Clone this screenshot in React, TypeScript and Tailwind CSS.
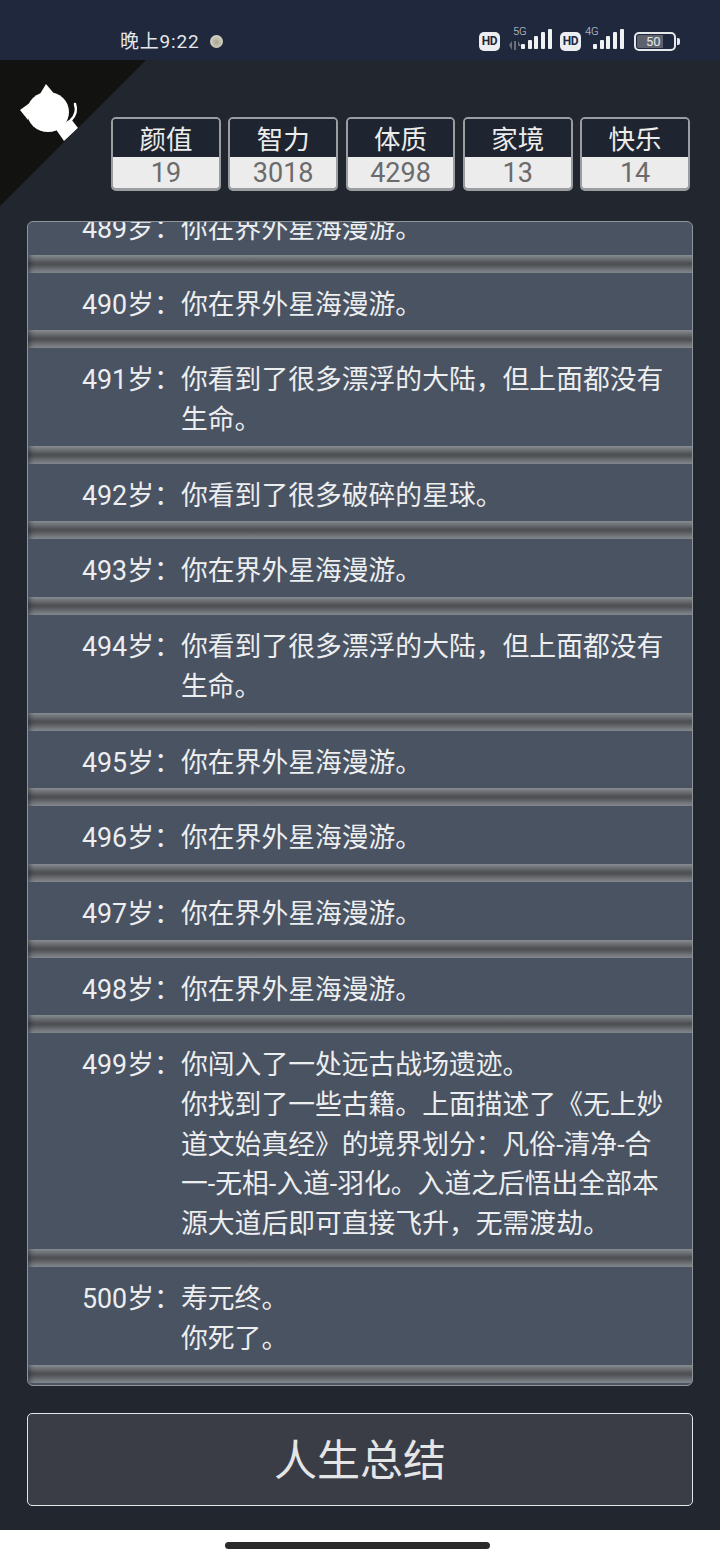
const font = { fontFamily: '"Roboto", "Noto Sans CJK SC", sans-serif' }

const stats = [
  { label: '颜值', value: 19 },
  { label: '智力', value: 3018 },
  { label: '体质', value: 4298 },
  { label: '家境', value: 13 },
  { label: '快乐', value: 14 },
]

const floating = '你看到了很多漂浮的大陆，但上面都没有生命。'
const roaming = '你在界外星海漫游。'

const rows = [
  { age: 489, lines: [roaming] },
  { age: 490, lines: [roaming] },
  { age: 491, lines: [floating] },
  { age: 492, lines: ['你看到了很多破碎的星球。'] },
  { age: 493, lines: [roaming] },
  { age: 494, lines: [floating] },
  { age: 495, lines: [roaming] },
  { age: 496, lines: [roaming] },
  { age: 497, lines: [roaming] },
  { age: 498, lines: [roaming] },
  {
    age: 499,
    lines: [
      '你闯入了一处远古战场遗迹。',
      '你找到了一些古籍。上面描述了《无上妙道文始真经》的境界划分：凡俗-清净-合一-无相-入道-羽化。入道之后悟出全部本源大道后即可直接飞升，无需渡劫。',
    ],
  },
  { age: 500, lines: ['寿元终。', '你死了。'] },
]

function Signal({ label, lost }: { label: string; lost?: boolean }) {
  return (
    <div className="relative h-[24px] w-[44px]">
      <span className="absolute left-[1px] top-[-3px] text-[11px] font-light leading-[12px] text-[#d5d8de]">{label}</span>
      {lost && (
        <svg className="absolute left-[-3px] top-[12px]" width="12" height="9" viewBox="0 0 12 9" fill="#6b7078">
          <path d="M0 4 L3 0 L3 9 Z M5 0 H7 V9 H5 Z M9 0 L12 5 H9 Z" />
        </svg>
      )}
      <svg className="absolute left-[9px] top-0" width="31" height="20" viewBox="0 0 31 20" fill="#f0f1f3">
        <rect x="0" y="15" width="4" height="5" rx="1" />
        <rect x="7" y="11" width="4" height="9" rx="1" />
        <rect x="13" y="7" width="4" height="13" rx="1" />
        <rect x="20" y="3" width="4" height="17" rx="1" />
        <rect x="27" y="0" width="4" height="20" rx="1" />
      </svg>
    </div>
  )
}

function HdBadge() {
  return (
    <span className="flex h-[19px] w-[21px] items-center justify-center rounded-[5px] bg-[#eceef1] text-[12px] font-bold tracking-[-0.5px] text-[#1f283d]">
      HD
    </span>
  )
}

function StatusBar() {
  return (
    <div className="flex h-[60px] items-center bg-[#1f283d] pl-[120px] pt-[22px]">
      <span className="w-[86px] text-[19px] leading-none tracking-[0.8px] text-[#e4e6ea]">晚上9:22</span>
      <span className="ml-[4px] h-[13px] w-[13px] rounded-full bg-[radial-gradient(circle_at_50%_55%,#a8a690,#e8e6d8)]" />
      <div className="ml-auto flex items-center pr-[40px]">
        <HdBadge />
        <div className="ml-[12px] mr-[4px]">
          <Signal label="5G" lost />
        </div>
        <HdBadge />
        <div className="ml-[3px] mr-[6px]">
          <Signal label="4G" />
        </div>
        <div className="flex h-[19px] w-[42px] items-center rounded-[5px] border-2 border-[#e6e8eb] bg-[#1f283d] p-px">
          <span className="flex h-full w-[26px] items-center rounded-l-[2px] bg-[#5d626d]">
            <span className="ml-[9px] text-[13px] leading-none text-[#e6e8eb]">50</span>
          </span>
        </div>
        <span className="ml-px h-[7px] w-[3px] rounded-r-[2px] bg-[#e6e8eb]" />
      </div>
    </div>
  )
}

function CatBadge() {
  return (
    <div className="absolute left-0 top-0 h-[146px] w-[146px] bg-[#121311] [clip-path:polygon(0_0,100%_0,0_100%)]">
      <svg width="110" height="110" viewBox="0 0 110 110" fill="#ffffff">
        <ellipse cx="48" cy="52" rx="21" ry="20" />
        <path d="M46 24 L40 34 L56 36 Z" />
        <path d="M20 50 L31 42 L28 60 Z" />
        <path d="M55 68 L71 59 L78 68 L64 81 Z" />
        <path d="M75 44 C77 50 76 55 71 60" fill="none" stroke="#ffffff" strokeWidth="2.5" strokeLinecap="round" />
      </svg>
    </div>
  )
}

function StatCard({ label, value }: { label: string; value: number }) {
  return (
    <div className="flex h-[74px] flex-1 flex-col overflow-hidden rounded-[5px] border-2 border-b-[3px] border-[#9b9da1]">
      <div className="flex h-[38px] items-center justify-center bg-[#1f2530] pt-[5px] text-[26.5px] leading-none text-[#ececec]">
        {label}
      </div>
      <div className="flex flex-1 items-center justify-center bg-[#ececec] pt-[2px] text-[27px] leading-none text-[#6b6b6b]">
        {value}
      </div>
    </div>
  )
}

function Separator() {
  return (
    <div className="h-[18px] bg-[linear-gradient(to_bottom,#8b9096_0px,#72767a_3px,#505154_8px,#505154_10px,#72767a_15px,#868a91_18px)] shadow-[inset_6px_0_5px_-4px_rgba(30,35,45,0.55)]" />
  )
}

export default function App() {
  return (
    <div className="flex h-[1560px] w-[720px] flex-col bg-white" style={font}>
      <StatusBar />

      <div className="relative flex h-[1470px] flex-col bg-[#21262f] px-[27px]">
        <CatBadge />

        <div className="relative ml-[84px] mr-[3px] mt-[57px] flex gap-[7.5px]">
          {stats.map(s => (
            <StatCard key={s.label} label={s.label} value={s.value} />
          ))}
        </div>

        <div className="mt-[30px] h-[1165px] overflow-hidden rounded-[6px] border border-[#8f949b] bg-[#4a5362]">
          <div className="mt-[-25px]">
            {rows.map(row => (
              <div key={row.age}>
                <div className="flex pb-[5.14px] pl-[54px] pr-[21px] pt-[13px] text-[26.8px] leading-[39.6px] text-[#eceef0]">
                  <span className="w-[99px] shrink-0 whitespace-nowrap">{row.age}岁：</span>
                  <div className="min-w-0 flex-1">
                    {row.lines.map(line => (
                      <p key={line}>{line}</p>
                    ))}
                  </div>
                </div>
                <Separator />
              </div>
            ))}
          </div>
        </div>

        <button className="mt-[27px] h-[93px] rounded-[5px] border-[1.5px] border-[#e4e5e7] bg-[#3a3d46] pt-[4px] text-[43px] text-[#e4e5e7]">
          人生总结
        </button>
      </div>

      <div className="flex flex-1 items-center justify-center pr-[5px]">
        <span className="h-[7px] w-[265px] rounded-full bg-[#2b2b2b]" />
      </div>
    </div>
  )
}
